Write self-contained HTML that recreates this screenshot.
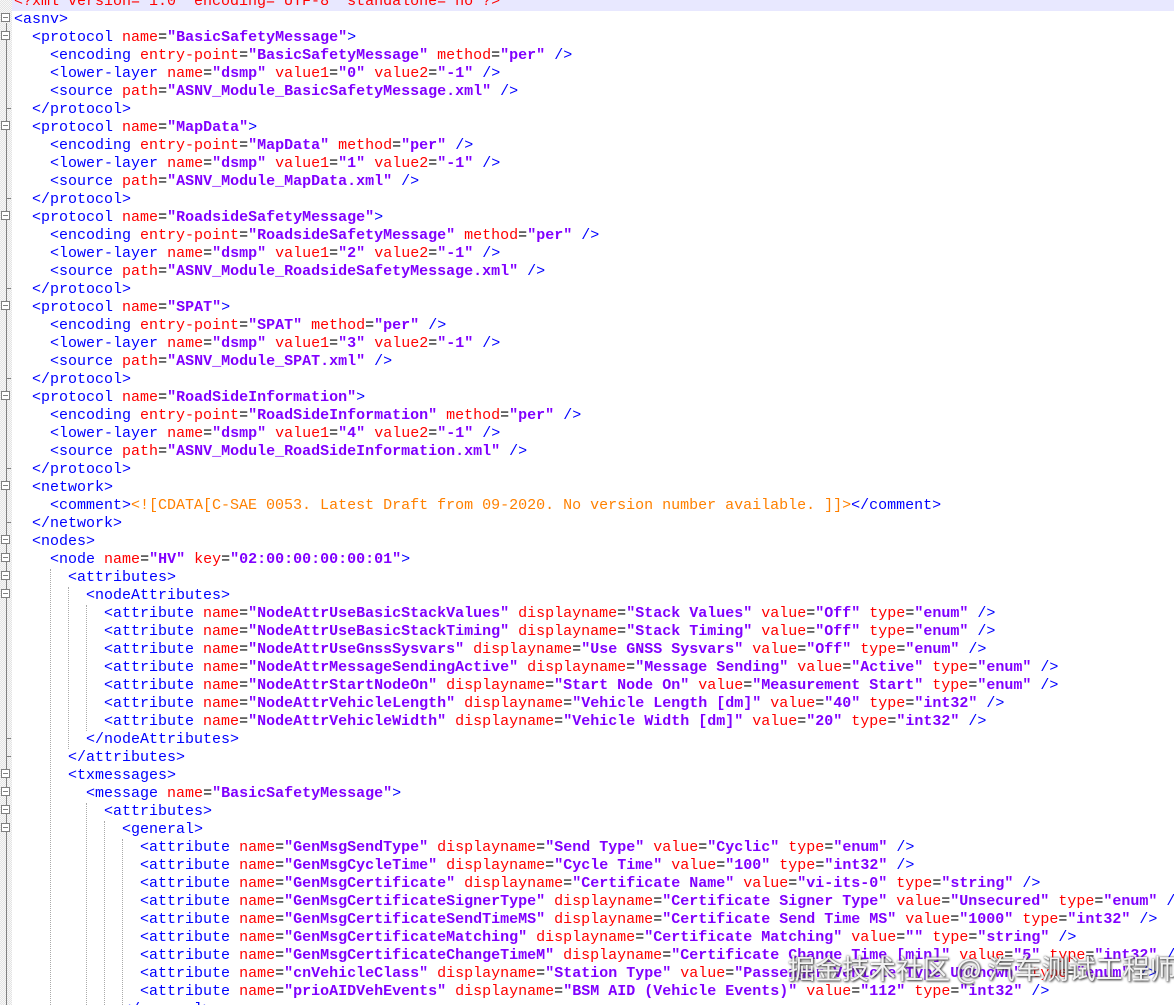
<!DOCTYPE html>
<html><head><meta charset="utf-8"><style>
html,body{margin:0;padding:0;background:#fff;width:1174px;height:1005px;overflow:hidden;position:relative}
#code{position:absolute;left:0;top:-7px;width:1174px;font-family:"Liberation Mono","Courier New",monospace;font-size:15px;color:#000}
.l{height:18px;line-height:18px;white-space:pre;padding-left:14px}
.t{color:#0000ff}.a{color:#ff0000}.v{color:#8000ff;font-weight:bold}.c{color:#ff8000}
.hl{background:#e8e8ff}
#margin{position:absolute;left:0;top:0;width:12px;height:1005px;background:repeating-conic-gradient(#e4e4e4 0 25%,#f8f8f8 0 50%) 0 0/2px 2px}
#fl{position:absolute;left:6px;top:23px;width:1px;height:982px;background:#808080}
.b{position:absolute;left:1px;width:9px;height:9px;border:1px solid #808080;background:#fff;box-sizing:border-box}
.b:after{content:"";position:absolute;left:1px;top:3px;width:5px;height:1px;background:#808080}
.e{position:absolute;left:6px;width:5px;height:1px;background:#808080}
.g{position:absolute;width:0;border-left:1px dotted #aaa}
#wm{position:absolute;left:788px;top:948px;font-family:"Noto Sans CJK SC",sans-serif;font-size:27px;color:rgba(255,255,255,0.92);text-shadow:0 0 2px #555,1px 1px 2px #333;white-space:nowrap}
</style></head><body>
<div id="code">
<div class="l hl"><span class="a">&lt;?</span><span class="v" style="font-weight:normal;color:#f00">xml version="1.0" encoding="UTF-8" standalone="no"</span><span class="a">?&gt;</span></div>
<div class="l"><span class="t">&lt;asnv&gt;</span></div>
<div class="l">  <span class="t">&lt;protocol</span> <span class="a">name</span>=<span class="v">"BasicSafetyMessage"</span><span class="t">&gt;</span></div>
<div class="l">    <span class="t">&lt;encoding</span> <span class="a">entry-point</span>=<span class="v">"BasicSafetyMessage"</span> <span class="a">method</span>=<span class="v">"per"</span> <span class="t">/&gt;</span></div>
<div class="l">    <span class="t">&lt;lower-layer</span> <span class="a">name</span>=<span class="v">"dsmp"</span> <span class="a">value1</span>=<span class="v">"0"</span> <span class="a">value2</span>=<span class="v">"-1"</span> <span class="t">/&gt;</span></div>
<div class="l">    <span class="t">&lt;source</span> <span class="a">path</span>=<span class="v">"ASNV_Module_BasicSafetyMessage.xml"</span> <span class="t">/&gt;</span></div>
<div class="l">  <span class="t">&lt;/protocol&gt;</span></div>
<div class="l">  <span class="t">&lt;protocol</span> <span class="a">name</span>=<span class="v">"MapData"</span><span class="t">&gt;</span></div>
<div class="l">    <span class="t">&lt;encoding</span> <span class="a">entry-point</span>=<span class="v">"MapData"</span> <span class="a">method</span>=<span class="v">"per"</span> <span class="t">/&gt;</span></div>
<div class="l">    <span class="t">&lt;lower-layer</span> <span class="a">name</span>=<span class="v">"dsmp"</span> <span class="a">value1</span>=<span class="v">"1"</span> <span class="a">value2</span>=<span class="v">"-1"</span> <span class="t">/&gt;</span></div>
<div class="l">    <span class="t">&lt;source</span> <span class="a">path</span>=<span class="v">"ASNV_Module_MapData.xml"</span> <span class="t">/&gt;</span></div>
<div class="l">  <span class="t">&lt;/protocol&gt;</span></div>
<div class="l">  <span class="t">&lt;protocol</span> <span class="a">name</span>=<span class="v">"RoadsideSafetyMessage"</span><span class="t">&gt;</span></div>
<div class="l">    <span class="t">&lt;encoding</span> <span class="a">entry-point</span>=<span class="v">"RoadsideSafetyMessage"</span> <span class="a">method</span>=<span class="v">"per"</span> <span class="t">/&gt;</span></div>
<div class="l">    <span class="t">&lt;lower-layer</span> <span class="a">name</span>=<span class="v">"dsmp"</span> <span class="a">value1</span>=<span class="v">"2"</span> <span class="a">value2</span>=<span class="v">"-1"</span> <span class="t">/&gt;</span></div>
<div class="l">    <span class="t">&lt;source</span> <span class="a">path</span>=<span class="v">"ASNV_Module_RoadsideSafetyMessage.xml"</span> <span class="t">/&gt;</span></div>
<div class="l">  <span class="t">&lt;/protocol&gt;</span></div>
<div class="l">  <span class="t">&lt;protocol</span> <span class="a">name</span>=<span class="v">"SPAT"</span><span class="t">&gt;</span></div>
<div class="l">    <span class="t">&lt;encoding</span> <span class="a">entry-point</span>=<span class="v">"SPAT"</span> <span class="a">method</span>=<span class="v">"per"</span> <span class="t">/&gt;</span></div>
<div class="l">    <span class="t">&lt;lower-layer</span> <span class="a">name</span>=<span class="v">"dsmp"</span> <span class="a">value1</span>=<span class="v">"3"</span> <span class="a">value2</span>=<span class="v">"-1"</span> <span class="t">/&gt;</span></div>
<div class="l">    <span class="t">&lt;source</span> <span class="a">path</span>=<span class="v">"ASNV_Module_SPAT.xml"</span> <span class="t">/&gt;</span></div>
<div class="l">  <span class="t">&lt;/protocol&gt;</span></div>
<div class="l">  <span class="t">&lt;protocol</span> <span class="a">name</span>=<span class="v">"RoadSideInformation"</span><span class="t">&gt;</span></div>
<div class="l">    <span class="t">&lt;encoding</span> <span class="a">entry-point</span>=<span class="v">"RoadSideInformation"</span> <span class="a">method</span>=<span class="v">"per"</span> <span class="t">/&gt;</span></div>
<div class="l">    <span class="t">&lt;lower-layer</span> <span class="a">name</span>=<span class="v">"dsmp"</span> <span class="a">value1</span>=<span class="v">"4"</span> <span class="a">value2</span>=<span class="v">"-1"</span> <span class="t">/&gt;</span></div>
<div class="l">    <span class="t">&lt;source</span> <span class="a">path</span>=<span class="v">"ASNV_Module_RoadSideInformation.xml"</span> <span class="t">/&gt;</span></div>
<div class="l">  <span class="t">&lt;/protocol&gt;</span></div>
<div class="l">  <span class="t">&lt;network&gt;</span></div>
<div class="l">    <span class="t">&lt;comment&gt;</span><span class="c">&lt;![CDATA[C-SAE 0053. Latest Draft from 09-2020. No version number available. ]]&gt;</span><span class="t">&lt;/comment&gt;</span></div>
<div class="l">  <span class="t">&lt;/network&gt;</span></div>
<div class="l">  <span class="t">&lt;nodes&gt;</span></div>
<div class="l">    <span class="t">&lt;node</span> <span class="a">name</span>=<span class="v">"HV"</span> <span class="a">key</span>=<span class="v">"02:00:00:00:00:01"</span><span class="t">&gt;</span></div>
<div class="l">      <span class="t">&lt;attributes&gt;</span></div>
<div class="l">        <span class="t">&lt;nodeAttributes&gt;</span></div>
<div class="l">          <span class="t">&lt;attribute</span> <span class="a">name</span>=<span class="v">"NodeAttrUseBasicStackValues"</span> <span class="a">displayname</span>=<span class="v">"Stack Values"</span> <span class="a">value</span>=<span class="v">"Off"</span> <span class="a">type</span>=<span class="v">"enum"</span> <span class="t">/&gt;</span></div>
<div class="l">          <span class="t">&lt;attribute</span> <span class="a">name</span>=<span class="v">"NodeAttrUseBasicStackTiming"</span> <span class="a">displayname</span>=<span class="v">"Stack Timing"</span> <span class="a">value</span>=<span class="v">"Off"</span> <span class="a">type</span>=<span class="v">"enum"</span> <span class="t">/&gt;</span></div>
<div class="l">          <span class="t">&lt;attribute</span> <span class="a">name</span>=<span class="v">"NodeAttrUseGnssSysvars"</span> <span class="a">displayname</span>=<span class="v">"Use GNSS Sysvars"</span> <span class="a">value</span>=<span class="v">"Off"</span> <span class="a">type</span>=<span class="v">"enum"</span> <span class="t">/&gt;</span></div>
<div class="l">          <span class="t">&lt;attribute</span> <span class="a">name</span>=<span class="v">"NodeAttrMessageSendingActive"</span> <span class="a">displayname</span>=<span class="v">"Message Sending"</span> <span class="a">value</span>=<span class="v">"Active"</span> <span class="a">type</span>=<span class="v">"enum"</span> <span class="t">/&gt;</span></div>
<div class="l">          <span class="t">&lt;attribute</span> <span class="a">name</span>=<span class="v">"NodeAttrStartNodeOn"</span> <span class="a">displayname</span>=<span class="v">"Start Node On"</span> <span class="a">value</span>=<span class="v">"Measurement Start"</span> <span class="a">type</span>=<span class="v">"enum"</span> <span class="t">/&gt;</span></div>
<div class="l">          <span class="t">&lt;attribute</span> <span class="a">name</span>=<span class="v">"NodeAttrVehicleLength"</span> <span class="a">displayname</span>=<span class="v">"Vehicle Length [dm]"</span> <span class="a">value</span>=<span class="v">"40"</span> <span class="a">type</span>=<span class="v">"int32"</span> <span class="t">/&gt;</span></div>
<div class="l">          <span class="t">&lt;attribute</span> <span class="a">name</span>=<span class="v">"NodeAttrVehicleWidth"</span> <span class="a">displayname</span>=<span class="v">"Vehicle Width [dm]"</span> <span class="a">value</span>=<span class="v">"20"</span> <span class="a">type</span>=<span class="v">"int32"</span> <span class="t">/&gt;</span></div>
<div class="l">        <span class="t">&lt;/nodeAttributes&gt;</span></div>
<div class="l">      <span class="t">&lt;/attributes&gt;</span></div>
<div class="l">      <span class="t">&lt;txmessages&gt;</span></div>
<div class="l">        <span class="t">&lt;message</span> <span class="a">name</span>=<span class="v">"BasicSafetyMessage"</span><span class="t">&gt;</span></div>
<div class="l">          <span class="t">&lt;attributes&gt;</span></div>
<div class="l">            <span class="t">&lt;general&gt;</span></div>
<div class="l">              <span class="t">&lt;attribute</span> <span class="a">name</span>=<span class="v">"GenMsgSendType"</span> <span class="a">displayname</span>=<span class="v">"Send Type"</span> <span class="a">value</span>=<span class="v">"Cyclic"</span> <span class="a">type</span>=<span class="v">"enum"</span> <span class="t">/&gt;</span></div>
<div class="l">              <span class="t">&lt;attribute</span> <span class="a">name</span>=<span class="v">"GenMsgCycleTime"</span> <span class="a">displayname</span>=<span class="v">"Cycle Time"</span> <span class="a">value</span>=<span class="v">"100"</span> <span class="a">type</span>=<span class="v">"int32"</span> <span class="t">/&gt;</span></div>
<div class="l">              <span class="t">&lt;attribute</span> <span class="a">name</span>=<span class="v">"GenMsgCertificate"</span> <span class="a">displayname</span>=<span class="v">"Certificate Name"</span> <span class="a">value</span>=<span class="v">"vi-its-0"</span> <span class="a">type</span>=<span class="v">"string"</span> <span class="t">/&gt;</span></div>
<div class="l">              <span class="t">&lt;attribute</span> <span class="a">name</span>=<span class="v">"GenMsgCertificateSignerType"</span> <span class="a">displayname</span>=<span class="v">"Certificate Signer Type"</span> <span class="a">value</span>=<span class="v">"Unsecured"</span> <span class="a">type</span>=<span class="v">"enum"</span> <span class="t">/&gt;</span></div>
<div class="l">              <span class="t">&lt;attribute</span> <span class="a">name</span>=<span class="v">"GenMsgCertificateSendTimeMS"</span> <span class="a">displayname</span>=<span class="v">"Certificate Send Time MS"</span> <span class="a">value</span>=<span class="v">"1000"</span> <span class="a">type</span>=<span class="v">"int32"</span> <span class="t">/&gt;</span></div>
<div class="l">              <span class="t">&lt;attribute</span> <span class="a">name</span>=<span class="v">"GenMsgCertificateMatching"</span> <span class="a">displayname</span>=<span class="v">"Certificate Matching"</span> <span class="a">value</span>=<span class="v">""</span> <span class="a">type</span>=<span class="v">"string"</span> <span class="t">/&gt;</span></div>
<div class="l">              <span class="t">&lt;attribute</span> <span class="a">name</span>=<span class="v">"GenMsgCertificateChangeTimeM"</span> <span class="a">displayname</span>=<span class="v">"Certificate Change Time [min]"</span> <span class="a">value</span>=<span class="v">"5"</span> <span class="a">type</span>=<span class="v">"int32"</span> <span class="t">/&gt;</span></div>
<div class="l">              <span class="t">&lt;attribute</span> <span class="a">name</span>=<span class="v">"cnVehicleClass"</span> <span class="a">displayname</span>=<span class="v">"Station Type"</span> <span class="a">value</span>=<span class="v">"Passenger Vehicle Type Unknown"</span> <span class="a">type</span>=<span class="v">"enum"</span> <span class="t">/&gt;</span></div>
<div class="l">              <span class="t">&lt;attribute</span> <span class="a">name</span>=<span class="v">"prioAIDVehEvents"</span> <span class="a">displayname</span>=<span class="v">"BSM AID (Vehicle Events)"</span> <span class="a">value</span>=<span class="v">"112"</span> <span class="a">type</span>=<span class="v">"int32"</span> <span class="t">/&gt;</span></div>
<div class="l">            <span class="t">&lt;/general&gt;</span></div>
</div>
<div class="g" style="left:50px;top:569px;height:436px"></div>
<div class="g" style="left:68px;top:587px;height:162px"></div>
<div class="g" style="left:86px;top:605px;height:126px"></div>
<div class="g" style="left:86px;top:803px;height:202px"></div>
<div class="g" style="left:104px;top:821px;height:184px"></div>
<div class="g" style="left:122px;top:839px;height:166px"></div>
<div id="margin">
<div id="fl"></div>
<div class="b" style="top:13px"></div>
<div class="b" style="top:31px"></div><div class="e" style="top:108px"></div>
<div class="b" style="top:121px"></div><div class="e" style="top:198px"></div>
<div class="b" style="top:211px"></div><div class="e" style="top:288px"></div>
<div class="b" style="top:301px"></div><div class="e" style="top:378px"></div>
<div class="b" style="top:391px"></div><div class="e" style="top:468px"></div>
<div class="b" style="top:481px"></div><div class="e" style="top:522px"></div>
<div class="b" style="top:535px"></div>
<div class="b" style="top:553px"></div>
<div class="b" style="top:571px"></div>
<div class="b" style="top:589px"></div><div class="e" style="top:738px"></div><div class="e" style="top:756px"></div>
<div class="b" style="top:769px"></div>
<div class="b" style="top:787px"></div>
<div class="b" style="top:805px"></div>
<div class="b" style="top:823px"></div>
</div>
<div id="wm">掘金技术社区 @ 汽车测试工程师</div>
</body></html>
